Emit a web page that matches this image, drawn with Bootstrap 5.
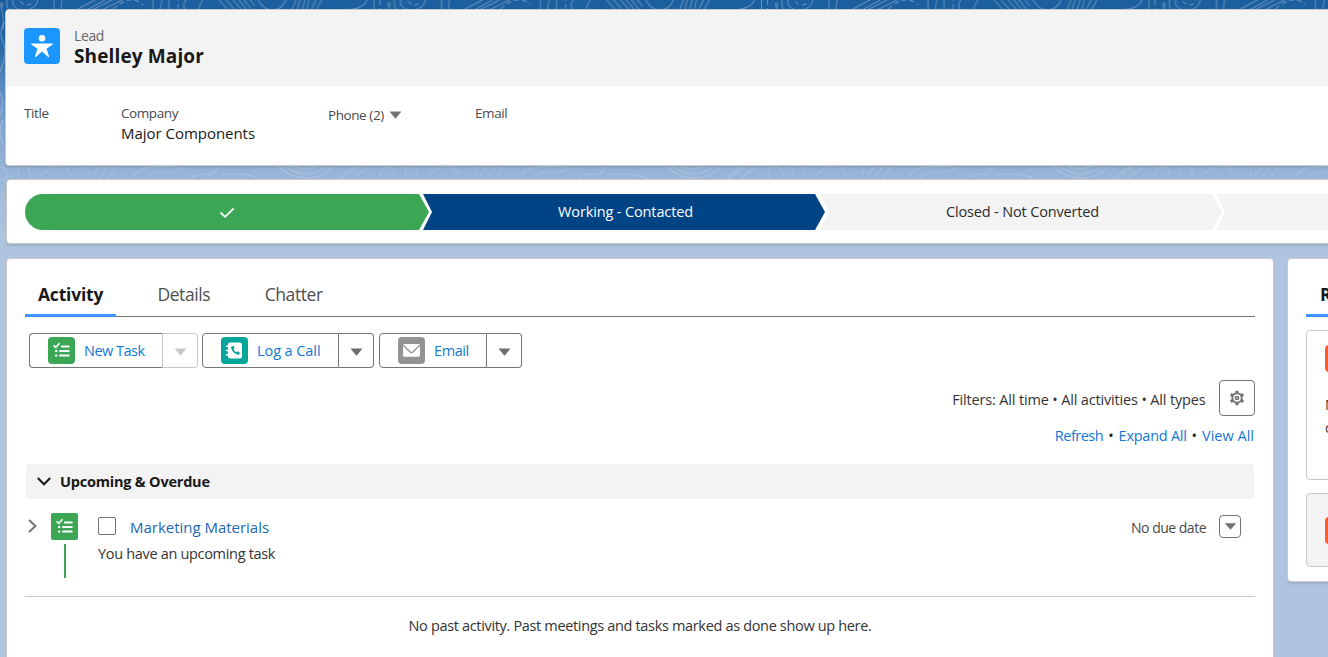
<!DOCTYPE html>
<html lang="en">
<head>
<meta charset="utf-8">
<meta name="viewport" content="width=device-width, initial-scale=1">
<title>Shelley Major | Lead</title>
<link href="https://cdn.jsdelivr.net/npm/bootstrap@5.3.0/dist/css/bootstrap.min.css" rel="stylesheet">
<style>
  body { font-family: "Open Sans", "Noto Sans", sans-serif; font-size: 14.5px; line-height: 20px; color: #333; background: #b0c4df; height: 100vh; overflow: hidden; white-space: nowrap; }
  .backdrop { position: absolute; left: 0; top: 0; width: 100%; height: 235px; background: linear-gradient(#1b5f9e 0, #1b5f9e 22px, #2a6aa7 50px, #5b8cc1 88px, #85a7d0 130px, #95b2d5 168px, #a5bcdb 200px, #b0c4df 235px); }
  .page { position: relative; height: 100vh; overflow: hidden; padding-top: 9px; }
  .panel { background: #fff; border: 1px solid #c9c9c9; border-radius: 4px; box-shadow: 0 2px 2px rgba(0,0,0,.1); }
  .record { margin-left: 5px; margin-right: -8px; height: 157px; overflow: hidden; }
  .record-top { background: #f3f3f3; height: 76px; padding: 18px; gap: 14px; }
  .record-icon { width: 36px; height: 36px; border-radius: 4px; background: #1b96ff; }
  .names { margin-top: -1px; }
  .kind { font-size: 14px; line-height: 17px; color: #666; letter-spacing: -.38px; }
  .record-name { font-size: 19px; line-height: 24px; font-weight: 700; color: #181818; letter-spacing: .13px; margin: 0; }
  .fields { padding: 17px 18px 0; font-size: 13.5px; color: #4a4a4a; }
  .lbl { letter-spacing: -.42px; }
  .lbl-title { width: 97px; }
  .lbl-company { width: 207px; }
  .lbl-phone { width: 147px; padding-top: 2px; gap: 5px; }
  .company-name { font-size: 15px; color: #181818; letter-spacing: -.03px; }
  .path-panel { margin: 13px -8px 0 6px; height: 65px; padding: 14px 0 0 18px; }
  .stage { position: relative; height: 36px; flex: 0 0 402px; margin-left: -6px; background: #f3f3f3; color: #2b2b2b; clip-path: polygon(0 0, calc(100% - 10px) 0, 100% 50%, calc(100% - 10px) 100%, 0 100%, 9px 50%); padding-left: 3px; }
  .stage-done { flex-basis: 404px; margin-left: 0; padding-left: 0; background: #3ba755; border-radius: 18px 0 0 18px; clip-path: polygon(0 0, calc(100% - 10px) 0, 100% 50%, calc(100% - 10px) 100%, 0 100%); }
  .stage-done svg { margin-top: 2px; }
  .stage-now { background: #014486; color: #fff; letter-spacing: -.13px; }
  .stage-next { letter-spacing: -.16px; margin-left: -5px; }
  .columns { margin: 14px -40px 0 6px; gap: 13px; }
  .activity { width: 1268px; height: 410px; padding: 14px 18px 0; }
  .tabbar { height: 44px; border-bottom: 1px solid #747474; font-size: 17.5px; }
  .tabbar .nav-link { padding: 11px 13px 0; line-height: 20px; height: 44px; color: #505050; letter-spacing: -.4px; border-radius: 0; }
  .tabbar .nav-link.active { width: 91px; font-weight: 700; color: #181818; letter-spacing: -.2px; border-bottom: 3px solid #3e95fb; }
  .tabbar .nav-link + .nav-link { margin-left: 28.4px; }
  .actions { padding: 16px 0 0 4px; gap: 4px; height: 63px; }
  .act { height: 35px; border: 1px solid #747474; border-radius: 4px 0 0 4px; padding: 0 0 0 18px; background: #fff; color: #1279d3; line-height: 20px; gap: 9px; }
  .act-task { width: 134px; letter-spacing: -.52px; border-right-color: #c9c9c9; }
  .act-call { width: 137px; letter-spacing: -.08px; }
  .act-email { width: 108px; letter-spacing: -.42px; }
  .act-more { height: 35px; width: 35px; padding: 0; border: 1px solid #747474; border-left: 0; border-radius: 0 4px 4px 0; color: #706e6b; background: #fff; }
  .act-more.off { border-color: #c9c9c9; color: #c9c9c9; }
  .ic { width: 27px; height: 27px; border-radius: 4px; }
  .ic-task { background: #3ba755; }
  .ic-call { background: #06a59a; }
  .ic-mail { background: #939393; }
  .gear { width: 36px; height: 36px; border: 1px solid #747474; border-radius: 4px; background: #fff; }
  .filters { letter-spacing: -.16px; gap: 13.5px; height: 36px; }
  .filters span { padding-top: 3px; }
  .quick { height: 20px; margin-top: 10px; padding-right: 1px; color: #181818; gap: 5px; }
  .quick a, .task-link { text-decoration: none; color: #1279d3; }
  .section-bar { height: 35px; margin: 18px 1px 0; padding-left: 11px; gap: 9px; background: #f3f3f3; border-radius: 4px; font-weight: 700; letter-spacing: -.21px; color: #181818; }
  .task { height: 98px; border-bottom: 1px solid #c9c9c9; }
  .task .ic-task { border-radius: 2px; }
  .task-line { width: 2px; height: 34px; margin-top: 4px; background: #3ba755; }
  .tick { width: 18px; height: 18px; margin: 0; border: 1px solid #747474; border-radius: 2px !important; }
  .task-link { font-size: 15px; color: #1b67b2; letter-spacing: -.02px; }
  .due { font-size: 14px; letter-spacing: -.5px; color: #4a4a4a; padding-top: 3px; }
  .mini { width: 22px; height: 23px; border: 1px solid #747474; border-radius: 4px; background: #fff; }
  .side { width: 320px; height: 324px; padding: 14px 18px; flex: none; }
  .side-tab { height: 44px; border-bottom: 3px solid #3e95fb; font-weight: 700; font-size: 17.5px; line-height: 20px; padding: 11px 14px 0; color: #181818; }
  .tile { border: 1px solid #c9c9c9; border-radius: 4px; padding-left: 18px; font-size: 14px; line-height: 23px; color: #3a3a3a; }
  .tile-a { height: 150px; margin-top: 13px; padding-top: 14px; }
  .tile-a .ic { margin-bottom: 21px; }
  .tile-b { height: 74px; margin-top: 13px; padding-top: 23px; background: #f3f3f3; }
  .ic-orange { background: #ff5d2d; }
</style>
</head>
<body>
<svg width="0" height="0" class="position-absolute" aria-hidden="true">
  <symbol id="i-task" viewBox="0 0 27 27">
    <path d="M5.600 8.300l2.200 2L11.600 6.200" fill="none" stroke="#fff" stroke-width="1.600"/>
    <path d="M13.800 9.400h6.900M12 14h8.700M12 18.600h8.700" stroke="#fff" stroke-width="2" stroke-linecap="round"/>
    <circle cx="8.200" cy="14" r="1.200" fill="#fff"/><circle cx="8.200" cy="18.600" r="1.200" fill="#fff"/>
  </symbol>
  <symbol id="i-down" viewBox="0 0 12 8"><path d="M.6.4h10.800q.6 0 .2.600L6.500 7.200q-.5.500-1 0L.4 1Q0 .4.600.4z" fill="currentColor"/></symbol>
</svg>
<div class="backdrop">
  <svg width="100%" height="235" aria-hidden="true">
    <defs>
      <pattern id="topo" width="387.500" height="235" patternUnits="userSpaceOnUse">
        <g fill="none" stroke="#c4d3ee" stroke-opacity=".4" stroke-width="1.100">
          <!-- contours along the upper edge -->
          <path d="M0 3Q4 14 3 30M13 0v5q6 7 17 4 7-3 8-9M7 0q-1 9 4 11M54 9V0M61 9l1-9M76 10L95 0M87 10L105 0M92 10l20-10M102 10l20-10M153 9V0M160 9l2-9M169 10V0M185 10q-3-6 1-10M199 10q0-5 4-10M219 0l9 10M226 0l9 10M233 0l9 10M239 0l8 10M244 0l8 10M250 0l5 6M258 0q6 10 14 10 10 0 14-10M292 10l4-10M297 10l3-10M302 10l3-10M307 10l2-10M311 10l5-10M316 10l6-10M343 10q20 0 24-10M374 10V0"/>
          <path d="M113 9q18-16 30-4M20 1q7 8 14 0M178 9V0M380 0v10M3 7l-2-7" stroke-dasharray="5 3"/>
          <path d="M5 22q-7 9-2 20T0 72M0 92q5 10 0 24M3 120q-6 10 0 24"/>
          <!-- contours between the two upper panels -->
          <circle cx="0.500" cy="174" r="7"/><circle cx="387.500" cy="174" r="7"/>
          <path d="M12 162q8 5 7 20M26 162l6 18M36 181q12-15 24-16 9 2 12 14M89 181l12-17M97 181l13-17M106 181l12-17M134 181q-2-11 16-14l26-1M145 181q0-9 22-9 13 1 14-8M189 181q8-10 22-6 5-3 7-11M221 175q24-4 45 6M276 164q14 15 35 14 16-2 23-14M282 164q13 11 27 10 11-1 18-10M290 164q14 9 30 0M336 181l22-17M350 181l18-14"/>
          <path d="M88 163v18M341 180l22-17" stroke-dasharray="5 3"/>
          <path d="M0 198l5-6M0 212l4-5"/>
        </g>
      </pattern>
    </defs>
    <rect width="100%" height="235" fill="url(#topo)"/>
  </svg>
</div>
<main class="page">
  <header class="panel record">
    <div class="record-top d-flex">
      <div class="record-icon flex-shrink-0">
        <svg class="d-block" width="36" height="36" viewBox="0 0 36 36"><circle cx="18" cy="10.300" r="3.300" fill="#fff"/><path d="M7.500 15.500h21q.6.300.2.900l-6.200 4.300 2.600 7.800q0 1-.9.600L18 23.500l-6.200 5.600q-.9.400-.9-.6l2.600-7.800-6.200-4.300q-.4-.6.200-.9z" fill="#fff"/></svg>
      </div>
      <div class="names">
        <div class="kind">Lead</div>
        <h1 class="record-name">Shelley Major</h1>
      </div>
    </div>
    <div class="fields d-flex">
      <div class="lbl lbl-title">Title</div>
      <div class="lbl-company"><div class="lbl">Company</div><div class="company-name">Major Components</div></div>
      <div class="lbl-phone d-flex align-items-center align-self-start"><span class="lbl">Phone (2)</span><svg width="13" height="8" color="#747474"><use href="#i-down"/></svg></div>
      <div class="lbl">Email</div>
    </div>
  </header>

  <section class="panel path-panel">
    <div class="d-flex">
      <div class="stage stage-done d-flex align-items-center justify-content-center"><svg width="16" height="12" viewBox="0 0 16 12"><path d="M1.500 5.500l4.600 4.300L14.600 1.500" fill="none" stroke="#fff" stroke-width="1.800"/></svg></div>
      <div class="stage stage-now d-flex align-items-center justify-content-center"><span>Working - Contacted</span></div>
      <div class="stage stage-next d-flex align-items-center justify-content-center"><span>Closed - Not Converted</span></div>
      <div class="stage"></div>
    </div>
  </section>

  <div class="columns d-flex align-items-start">
    <section class="panel activity flex-shrink-0">
      <nav class="nav tabbar flex-nowrap">
        <a class="nav-link active" href="#">Activity</a>
        <a class="nav-link" href="#">Details</a>
        <a class="nav-link" href="#">Chatter</a>
      </nav>
      <div class="actions d-flex">
        <div class="d-flex">
          <button class="act act-task d-flex align-items-center" type="button"><svg class="ic ic-task"><use href="#i-task"/></svg><span>New Task</span></button>
          <button class="act-more off" type="button" disabled aria-label="More task actions"><svg width="13" height="8"><use href="#i-down"/></svg></button>
        </div>
        <div class="d-flex">
          <button class="act act-call d-flex align-items-center" type="button"><svg class="ic ic-call" viewBox="0 0 27 27"><rect x="7" y="5.500" width="14" height="16" rx="2" fill="#fff"/><path d="M5.500 9.200h2.700M5.500 13.500h2.700M5.500 17.800h2.700" stroke="#fff" stroke-width="1.600" stroke-linecap="round"/><path d="M10.500 9.500l1.600-.6q.6-.1.800.5l.6 1.700q0 .5-.4.800-.6.500-.3 1 .8 1.400 2.200 2.200.6.200 1-.3.400-.6.900-.3l1.600.700q.4.300.3.700l-.6 1.500q-.4.600-1.200.4-5.700-1.200-6.900-7-.1-.9.400-1.300z" fill="#06a59a"/></svg><span>Log a Call</span></button>
          <button class="act-more" type="button" aria-label="More call actions"><svg width="13" height="8"><use href="#i-down"/></svg></button>
        </div>
        <div class="d-flex" style="margin-left:1px">
          <button class="act act-email d-flex align-items-center" type="button"><svg class="ic ic-mail" viewBox="0 0 27 27"><path d="M5.600 7h15.800q.6.100.2.600l-7.200 6.900q-.9.700-1.800 0L5.400 7.600q-.4-.5.200-.6z" fill="#fff"/><path d="M5 9l7 6.700q1.500 1.200 3 0L22 9v9.200q0 1.600-1.600 1.600H6.600Q5 19.800 5 18.200z" fill="#fff"/></svg><span>Email</span></button>
          <button class="act-more" type="button" aria-label="More email actions"><svg width="13" height="8"><use href="#i-down"/></svg></button>
        </div>
      </div>
      <div class="filters d-flex justify-content-end align-items-center">
        <span>Filters: All time • All activities • All types</span>
        <button class="gear d-flex align-items-center justify-content-center p-0" type="button" aria-label="Filter settings"><svg width="16" height="16" viewBox="0 0 16 16" fill="none" stroke="#747474"><circle cx="8" cy="8" r="4.700" stroke-width="1.900"/><circle cx="8" cy="8" r="1.500" stroke-width="1.700"/><path d="M8 .8v2.400M8 12.800v2.400M1.700 4.400l2.100 1.200M12.200 10.400l2.100 1.200M1.700 11.600l2.100-1.200M12.200 5.600l2.100-1.200" stroke-width="3"/></svg></button>
      </div>
      <div class="quick d-flex justify-content-end">
        <a href="#" style="letter-spacing:-.5px">Refresh</a><span>•</span><a href="#" style="letter-spacing:-.26px">Expand All</a><span>•</span><a href="#">View All</a>
      </div>
      <div class="section-bar d-flex align-items-center"><svg width="14" height="9" viewBox="0 0 14 9" fill="none" stroke="#181818" stroke-width="2"><path d="M.8 1L7 7.300 13.200 1"/></svg><span>Upcoming &amp; Overdue</span></div>
      <div class="task d-flex align-items-start">
        <svg style="margin:20px 14px 0 3px" width="9" height="14" viewBox="0 0 9 14" fill="none" stroke="#747474" stroke-width="2"><path d="M1 1l6.500 6L1 13"/></svg>
        <div class="d-flex flex-column align-items-center" style="padding-top:14px"><svg class="ic ic-task"><use href="#i-task"/></svg><div class="task-line"></div></div>
        <div style="padding:18px 0 0 20px">
          <div class="d-flex" style="height:27px"><input class="form-check-input tick" type="checkbox" aria-label="Complete task"><a class="task-link" href="#" style="margin-left:14px">Marketing Materials</a></div>
          <div style="letter-spacing:-.32px">You have an upcoming task</div>
        </div>
        <div class="d-flex align-items-center ms-auto" style="padding:16px 14px 0 0;gap:13px"><span class="due">No due date</span><button class="mini d-flex align-items-center justify-content-center p-0" type="button" aria-label="Task menu"><svg width="11" height="7" color="#747474" viewBox="0 0 12 8" preserveAspectRatio="none"><use href="#i-down"/></svg></button></div>
      </div>
      <p class="text-center mb-0" style="margin-top:19px;letter-spacing:-.335px">No past activity. Past meetings and tasks marked as done show up here.</p>
    </section>

    <aside class="panel side">
      <div class="side-tab">Related</div>
      <div class="tile tile-a"><div class="ic ic-orange"></div>No related items or<br>campaigns yet.</div>
      <div class="tile tile-b"><div class="ic ic-orange"></div></div>
    </aside>
  </div>
</main>
<script src="https://cdn.jsdelivr.net/npm/bootstrap@5.3.0/dist/js/bootstrap.bundle.min.js"></script>
</body>
</html>
